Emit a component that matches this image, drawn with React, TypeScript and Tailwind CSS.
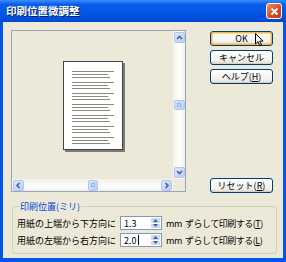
import React from "react";

const font = "font-['Noto_Sans_CJK_JP','Noto_Sans',sans-serif]";

const Chevron = ({ dir }: { dir: "up" | "down" | "left" | "right" }) => {
  const pts = {
    up: "1,5 3.5,2.5 6,5",
    down: "1,2 3.5,4.5 6,2",
    left: "4.5,1 2,3.5 4.5,6",
    right: "2.5,1 5,3.5 2.5,6",
  }[dir];
  return (
    <svg width="7" height="7" viewBox="0 0 7 7">
      <polyline points={pts} fill="none" stroke="#4d6185" strokeWidth="1.6" />
    </svg>
  );
};

const ScrollBtn = ({ dir }: { dir: "up" | "down" | "left" | "right" }) => (
  <div className="w-[11px] h-[11px] rounded-[2px] bg-[linear-gradient(135deg,#dbe6fe,#b9cdf9)] border border-[#b2c6f4] flex items-center justify-center">
    <Chevron dir={dir} />
  </div>
);

const Thumb = ({ vertical }: { vertical?: boolean }) => (
  <div
    className={`rounded-[2px] bg-[linear-gradient(135deg,#d6e2fd,#b9cdf9)] border border-[#b2c6f4] flex items-center justify-center ${
      vertical ? "w-[11px] h-[10px]" : "w-[10px] h-[11px]"
    }`}
  >
    <div className="w-[4px] h-[4px] border border-[#9fb3e6]"></div>
  </div>
);

const Button = ({ children, active }: { children: React.ReactNode; active?: boolean }) => (
  <div
    className={`w-[63px] h-[15px] rounded-[3px] border border-[#003c74] bg-[linear-gradient(to_bottom,#ffffff,#f3f2ec_70%,#dedcd1)] flex items-center justify-center text-[9px] leading-none text-black ${
      active ? "shadow-[inset_0_0_0_1.5px_#f6b64a]" : "shadow-[inset_0_-1px_0_#d6d0c5]"
    }`}
  >
    {children}
  </div>
);

const lineGroups = [0, 1, 2, 3, 4, 5, 6];

const Spin = ({ value, caret }: { value: string; caret?: boolean }) => (
  <div className="w-[42px] h-[14px] border border-[#7f9db9] bg-white flex items-stretch">
    <div className="flex-1 flex items-center pl-[3px] text-[9px] leading-none text-black">
      {value}
      {caret && <span className="w-px h-[10px] bg-black ml-[1px]"></span>}
    </div>
    <div className="w-[11px] flex flex-col gap-px p-px">
      <div className="flex-1 rounded-[1px] bg-[#c8d7fc] flex items-center justify-center">
        <svg width="5" height="3" viewBox="0 0 5 3"><polygon points="0,3 2.5,0 5,3" fill="#4d6185" /></svg>
      </div>
      <div className="flex-1 rounded-[1px] bg-[#c8d7fc] flex items-center justify-center">
        <svg width="5" height="3" viewBox="0 0 5 3"><polygon points="0,0 2.5,3 5,0" fill="#4d6185" /></svg>
      </div>
    </div>
  </div>
);

const Row = ({ label, value, key2, caret }: { label: string; value: string; key2: string; caret?: boolean }) => (
  <div className="flex items-center h-[14px]">
    <div className="w-[103px] text-[9px] leading-none text-black">{label}</div>
    <Spin value={value} caret={caret} />
    <div className="ml-[4px] text-[9px] leading-none text-black tracking-[-0.3px]">mm</div>
    <div className="ml-[3px] text-[9px] leading-none text-black tracking-[-0.5px]">
      ずらして印刷する(<span className="underline">{key2}</span>)
    </div>
  </div>
);

export default function App() {
  return (
    <div className={`w-[286px] h-[262px] bg-[#0055ea] flex flex-col ${font}`}>
      {/* title bar */}
      <div className="h-[22px] flex items-center justify-between pl-[6px] pr-[4px] bg-[linear-gradient(to_bottom,#3d8dff,#0a5ee9_20%,#0054e3_65%,#0049d4)]">
        <span className="text-white font-bold text-[10.5px] leading-none [text-shadow:1px_1px_0_#0a1e6e]">
          印刷位置微調整
        </span>
        <div className="w-[16px] h-[16px] rounded-[3px] border border-white bg-[linear-gradient(135deg,#f08e6e,#d9461f_60%,#c13a14)] flex items-center justify-center">
          <svg width="9" height="9" viewBox="0 0 9 9">
            <path d="M1.5 1.5 L7.5 7.5 M7.5 1.5 L1.5 7.5" stroke="white" strokeWidth="1.8" />
          </svg>
        </div>
      </div>

      {/* body */}
      <div className="flex-1 mx-[3px] mb-[4px] bg-[#ece9d8] flex flex-col pl-[8px] pt-[8px]">
        <div className="flex">
          {/* preview panel */}
          <div className="w-[175px] h-[162px] border border-[#9aa6b5] grid grid-cols-[161px_12px] grid-rows-[148px_12px]">
            <div className="flex items-center justify-center">
              <div className="w-[60px] h-[89px] bg-white border border-[#444] shadow-[2px_2px_0_#7c7b75] flex flex-col gap-[4px] pl-[8px] pt-[9px]">
                {lineGroups.map((g) => (
                  <div key={g} className="flex flex-col gap-[2px]">
                    <div className="w-[42px] h-px bg-[#8d897c]"></div>
                    <div className="w-[36px] h-px bg-[#8d897c]"></div>
                    <div className="w-[38px] h-px bg-[#8d897c]"></div>
                  </div>
                ))}
              </div>
            </div>
            <div className="flex flex-col items-center justify-between py-[1px] bg-[linear-gradient(to_right,#f3f1e9,#fefefe_60%,#f0efe8)]">
              <ScrollBtn dir="up" />
              <Thumb vertical />
              <ScrollBtn dir="down" />
            </div>
            <div className="flex items-center justify-between px-[1px] bg-[linear-gradient(to_bottom,#f3f1e9,#fefefe_60%,#f0efe8)]">
              <ScrollBtn dir="left" />
              <Thumb />
              <ScrollBtn dir="right" />
            </div>
            <div className="bg-[#ece9d8]"></div>
          </div>

          {/* buttons */}
          <div className="ml-[24px] pt-[1px] flex flex-col">
            <div className="relative">
              <Button active>OK</Button>
              <svg className="absolute left-[45px] top-[2px]" width="9" height="14" viewBox="0 0 9 14">
                <path d="M0.5 0.5 L0.5 11 L3 8.6 L4.8 12.8 L6.4 12.1 L4.7 8.1 L8 8.1 Z" fill="white" stroke="black" strokeWidth="1" strokeLinejoin="round" />
              </svg>
            </div>
            <div className="mt-[4px]">
              <Button>キャンセル</Button>
            </div>
            <div className="mt-[4px]">
              <Button>
                ヘルプ(<span className="underline">H</span>)
              </Button>
            </div>
            <div className="mt-[94px]">
              <Button>
                リセット(<span className="underline">R</span>)
              </Button>
            </div>
          </div>
        </div>

        {/* group box */}
        <fieldset className="ml-[1px] mt-[8px] w-[265px] border border-[#d0d0bf] rounded-[3px] pl-[4px] pt-[4px] pb-[6px] flex flex-col gap-[3px]">
          <legend className="ml-[2px] px-[1px] text-[9px] leading-[11px] text-[#0046d5]">印刷位置(ミリ)</legend>
          <Row label="用紙の上端から下方向に" value="1.3" key2="T" />
          <Row label="用紙の左端から右方向に" value="2.0" key2="L" caret />
        </fieldset>
      </div>
    </div>
  );
}
